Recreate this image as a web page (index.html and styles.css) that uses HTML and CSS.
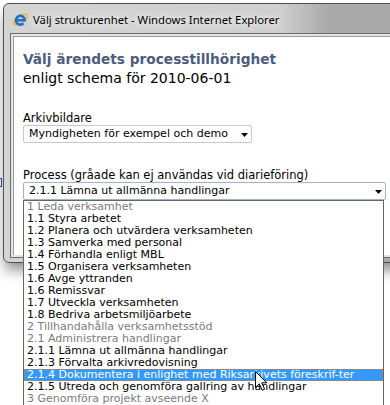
FILE: index.html
```html
<!DOCTYPE html>
<html lang="sv">
<head>
    <meta charset="UTF-8">
    <title>Välj strukturenhet</title>
    <link rel="stylesheet" href="styles.css">
</head>
<body>
    <span class="behind-mark"></span>

    <div class="window">
        <div class="titlebar">
            <svg class="ie-icon" width="17" height="17" viewBox="0 0 17 17">
                <ellipse cx="8.5" cy="8.5" rx="8" ry="3.4" transform="rotate(-35 8.5 8.5)" fill="none" stroke="#f2b52a" stroke-width="1.6"/>
                <path d="M4.2 9.2 H12.8 A4.4 4.4 0 1 0 11.6 12.3" fill="none" stroke="#1f6fd1" stroke-width="2.6"/>
            </svg>
            <span class="title">Välj strukturenhet - Windows Internet Explorer</span>
        </div>

        <div class="frame">
            <div class="page">
                <h1>Välj ärendets processtillhörighet</h1>
                <p class="sub">enligt schema för 2010-06-01</p>

                <div class="field">
                    <label>Arkivbildare</label>
                    <div class="select short">
                        <span>Myndigheten för exempel och demo</span>
                        <svg class="arrow" width="7" height="4" viewBox="0 0 7 4"><path d="M0 0 H7 L3.5 4 Z" fill="#000"/></svg>
                    </div>
                </div>

                <div class="field process">
                    <label>Process (gråade kan ej användas vid diarieföring)</label>
                    <div class="select wide focused">
                        <span>2.1.1 Lämna ut allmänna handlingar</span>
                        <svg class="arrow" width="7" height="4" viewBox="0 0 7 4"><path d="M0 0 H7 L3.5 4 Z" fill="#000"/></svg>

                        <ul class="dropdown">
                            <li class="disabled">1 Leda verksamhet</li>
                            <li>1.1 Styra arbetet</li>
                            <li>1.2 Planera och utvärdera verksamheten</li>
                            <li>1.3 Samverka med personal</li>
                            <li>1.4 Förhandla enligt MBL</li>
                            <li>1.5 Organisera verksamheten</li>
                            <li>1.6 Avge yttranden</li>
                            <li>1.6 Remissvar</li>
                            <li>1.7 Utveckla verksamheten</li>
                            <li>1.8 Bedriva arbetsmiljöarbete</li>
                            <li class="disabled">2 Tillhandahålla verksamhetsstöd</li>
                            <li class="disabled">2.1 Administrera handlingar</li>
                            <li>2.1.1 Lämna ut allmänna handlingar</li>
                            <li>2.1.3 Förvalta arkivredovisning</li>
                            <li class="selected">2.1.4 Dokumentera i enlighet med Riksarkivets föreskrif-ter</li>
                            <li>2.1.5 Utreda och genomföra gallring av handlingar</li>
                            <li class="disabled">3 Genomföra projekt avseende X</li>
                        </ul>
                    </div>
                </div>
            </div>
        </div>
    </div>

    <!-- mouse pointer over the list -->
    <svg class="cursor" width="13" height="20" viewBox="0 0 13 20">
        <path d="M0.5 0.5 V16.5 L4.3 12.8 L7.2 19.2 L9.6 18.2 L6.8 11.8 H11.8 Z" fill="#fff" stroke="#000" stroke-width="1" stroke-linejoin="round"/>
    </svg>
</body>
</html>
```

FILE: styles.css
```css
* {
    box-sizing: border-box;
}

body {
    margin: 0;
    width: 390px;
    height: 405px;
    overflow: hidden;
    position: relative;
    background-color: #fff;
    font-family: "DejaVu Sans", Verdana, sans-serif;
    color: #000;
}

.behind-mark {
    position: absolute;
    left: 0;
    top: 178px;
    width: 2px;
    height: 9px;
    border: 1px solid #2b3fa8;
    border-left: none;
}

/* window chrome */
.window {
    margin: 3px 0 0 3px;
    width: 420px;
    height: 260px;
    display: flex;
    flex-direction: column;
    padding: 0 0 4px 6px;
    border: 1px solid #505050;
    border-radius: 6px;
    background: linear-gradient(to right, #d4d4d4 0, #d0d0d0 275px, #aaaaaa 325px);
    box-shadow: 0 9px 14px -2px rgba(0, 0, 0, 0.45);
}

.titlebar {
    height: 29px;
    display: flex;
    align-items: center;
    gap: 4px;
    padding: 1px 0 0 2px;
}

.ie-icon {
    flex-shrink: 0;
}

.title {
    font-family: "Noto Sans", "Open Sans", sans-serif;
    font-size: 11.3px;
    color: #000;
    text-shadow: 0 0 6px #fff, 0 0 10px #fff;
}

.frame {
    flex: 1;
    display: flex;
    padding: 2px 0 2px 2px;
    border: 1px solid #6b6b6b;
    border-right: none;
    background-color: #e4e4e4;
}

.page {
    flex: 1;
    padding: 13px 9px;
    border-top: 1px solid #9a9a9a;
    border-left: 1px solid #9a9a9a;
    background-color: #fff;
}

h1 {
    margin: 0;
    font-size: 13.7px;
    line-height: 19px;
    font-weight: bold;
    color: #4d5c80;
}

.sub {
    margin: 0;
    font-size: 14px;
    line-height: 19px;
}

.field {
    margin-top: 23px;
}

.field.process {
    margin-top: 25px;
}

label {
    display: block;
    font-size: 11.5px;
    line-height: 14px;
}

/* select boxes */
.select {
    position: relative;
    height: 18px;
    display: flex;
    align-items: center;
    justify-content: space-between;
    padding: 0 3px 0 5px;
    border: 1px solid #c9c9c9;
    border-radius: 2px;
    background-color: #fff;
    font-size: 11px;
    line-height: 16px;
}

.select.short {
    width: 229px;
}

.select.wide {
    width: 363px;
}

.select.focused {
    border-color: #9fb5cc;
}

.arrow {
    flex-shrink: 0;
    margin-top: 1px;
}

/* open list */
.dropdown {
    position: absolute;
    left: -1px;
    top: calc(100% + 1px);
    width: 361px;
    margin: 0;
    padding: 0 0 40px;
    list-style: none;
    border: 1px solid #666;
    background-color: #fff;
    z-index: 2;
}

.dropdown li {
    height: 12px;
    padding-left: 3px;
    font-size: 11px;
    line-height: 12px;
    white-space: nowrap;
}

.dropdown li.disabled {
    color: #7b7b7b;
}

.dropdown li.selected {
    padding-left: 2px;
    border: 1px dotted #d27a1e;
    line-height: 10px;
    background-color: #3399ff;
    color: #fff;
}

.cursor {
    position: absolute;
    left: 255px;
    top: 371px;
    z-index: 5;
}
```
